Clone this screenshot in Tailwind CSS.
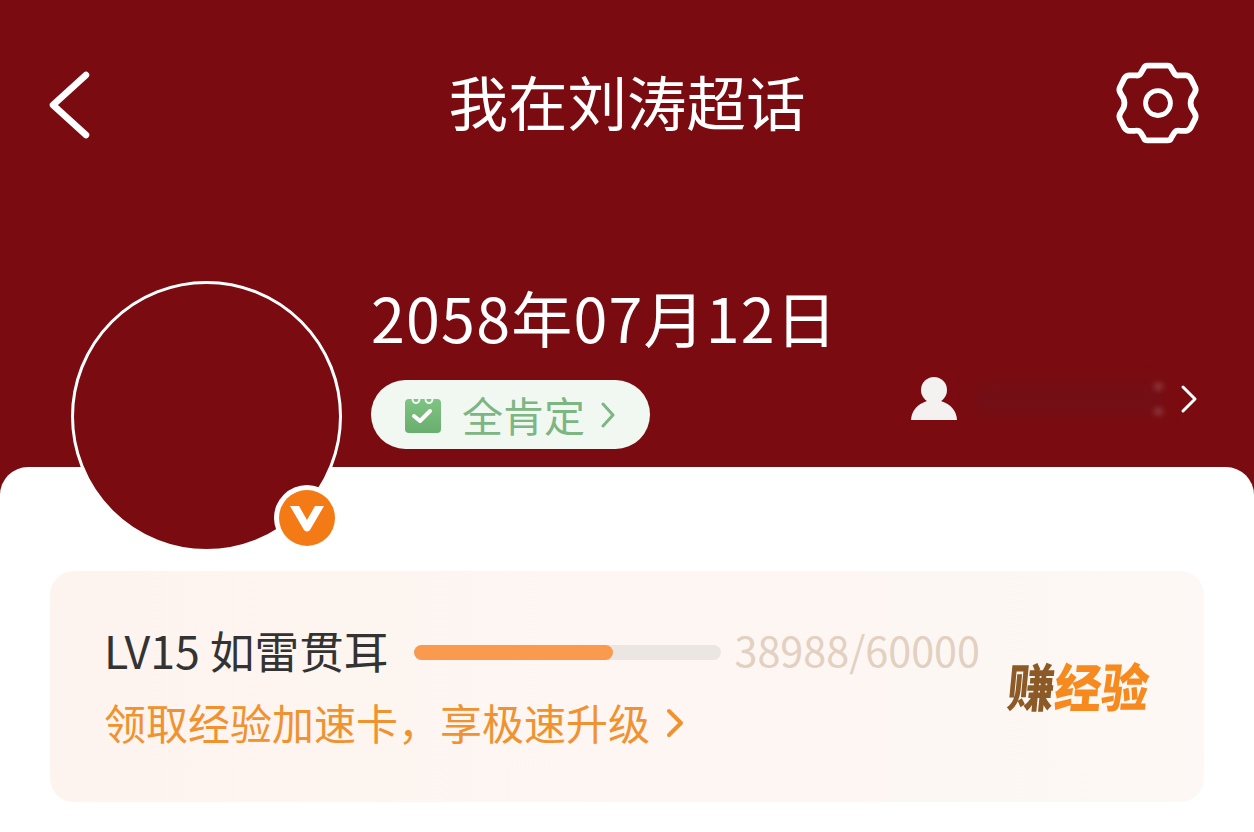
<!DOCTYPE html>
<html lang="zh-CN">
<head>
    <meta charset="UTF-8">
    <meta name="viewport" content="width=device-width, initial-scale=1.0">
    <title>我在刘涛超话</title>
    <script src="https://cdn.jsdelivr.net/npm/@tailwindcss/browser@4"></script>
</head>
<body class="bg-white font-['Noto_Sans_CJK_SC','Noto_Sans',sans-serif]">
    <div class="relative h-[832px] w-full overflow-hidden bg-[#7a0c11] flex flex-col">
        <!-- top part -->
        <header class="h-[467px] shrink-0 text-white">
            <nav class="mt-[54px] pt-[4px] h-[92px] pl-[47px] pr-[50px] grid grid-cols-[1fr_auto_1fr] items-center">
                <svg class="w-[48px] h-[72px]" viewBox="0 0 48 72" fill="none" stroke="white" stroke-width="6.5" stroke-linecap="round" stroke-linejoin="round">
                    <path d="M39 7 L6 37 L39 67"/>
                </svg>
                <h1 class="text-[59.5px] leading-none whitespace-nowrap pb-[6px] pl-[3px]">我在刘涛超话</h1>
                <svg class="justify-self-end w-[92px] h-[92px]" viewBox="-2 -2 96 96" fill="none" stroke="white" stroke-width="6" stroke-linejoin="round">
                    <path d="M35 6 H56 Q59 6 60 9 L63 14 Q65 17 69 16 L75 16 Q78 16 80 19 L85 29 Q86 32 84 35 L81 40 Q79 45 81 50 L84 55 Q86 58 85 61 L80 71 Q78 74 75 74 L69 74 Q65 73 63 76 L60 81 Q59 84 56 84 H35 Q32 84 31 81 L28 76 Q26 73 22 74 L16 74 Q13 74 11 71 L6 61 Q5 58 7 55 L10 50 Q12 45 10 40 L7 35 Q5 32 6 29 L11 19 Q13 16 16 16 L22 16 Q26 17 28 14 L31 9 Q32 6 35 6 Z"/>
                    <circle cx="46" cy="45" r="13" stroke-width="5"/>
                </svg>
            </nav>
            <div class="mt-[135px] pl-[371px] pr-[56px] flex justify-between items-end">
                <div>
                    <div class="text-[61px] leading-[72px] tracking-[1.2px] whitespace-nowrap">2058年07月12日</div>
                    <div class="mt-[27px] w-[279px] h-[69px] rounded-full bg-[#f1f8f2] flex items-center pl-[33px] text-[#7db583]">
                        <svg class="w-[38px] h-[38px]" viewBox="0 0 38 38">
                            <defs>
                                <linearGradient id="cal" x1="0" y1="0" x2="0" y2="1">
                                    <stop offset="0" stop-color="#80c483"/>
                                    <stop offset="1" stop-color="#6aae6f"/>
                                </linearGradient>
                            </defs>
                            <path d="M5 3 H33 Q37 3 37 7 V33 Q37 37 33 37 H5 Q1 37 1 33 V7 Q1 3 5 3 Z" fill="url(#cal)"/>
                            <path d="M8.5 3 a3.5 4 0 0 0 7 0 M21.5 3 a3.5 4 0 0 0 7 0" fill="none" stroke="#f1f8f2" stroke-width="2" stroke-linecap="round"/>
                            <path d="M10 20 L16 25 L26 15" fill="none" stroke="white" stroke-width="4" stroke-linecap="round" stroke-linejoin="round"/>
                        </svg>
                        <span class="ml-[20px] text-[41px] leading-none">全肯定</span>
                        <svg class="ml-[15px] w-[16px] h-[26px]" viewBox="0 0 16 26" fill="none" stroke="#7db583" stroke-width="3" stroke-linecap="round" stroke-linejoin="round">
                            <path d="M3 2 L13 13 L3 24"/>
                        </svg>
                    </div>
                </div>
                <div class="flex items-center mb-[28px]">
                    <svg class="w-[48px] h-[44px]" viewBox="0 0 48 44" fill="#f4f1f1">
                        <ellipse cx="24" cy="13" rx="13" ry="13"/>
                        <path d="M1 43 Q2 29 17 24 H31 Q46 29 47 43 Z"/>
                    </svg>
                    <!-- name is blurred out in the screenshot -->
                    <div class="relative ml-[18px] w-[186px] h-[30px]">
                        <div class="h-full bg-[#730f16] blur-[8px]"></div>
                        <div class="absolute right-0 top-0 w-[7px] h-[5px] bg-white/30 blur-[3px]"></div>
                        <div class="absolute right-0 bottom-0 w-[7px] h-[5px] bg-white/30 blur-[3px]"></div>
                    </div>
                    <svg class="ml-[18px] w-[18px] h-[30px]" viewBox="0 0 18 30" fill="none" stroke="white" stroke-width="3" stroke-linecap="round" stroke-linejoin="round">
                        <path d="M3 3 L15 15 L3 27"/>
                    </svg>
                </div>
            </div>
        </header>

        <!-- white sheet -->
        <main class="flex-1 bg-white rounded-t-[28px] px-[50px] pt-[104px]">
            <section class="h-[231px] w-[1154px] rounded-[24px] bg-gradient-to-r from-[#fdf4ef] to-[#fdf8f5] pl-[54px] pr-[55px] flex items-center justify-between">
                <div class="flex flex-col gap-[26px] pt-[3px]">
                    <div class="flex items-center h-[46px]">
                        <span class="text-[44.7px] leading-none text-[#333333] whitespace-nowrap pb-[4px]">LV15 如雷贯耳</span>
                        <div class="ml-[25px] w-[307px] h-[15px] rounded-full bg-[#ece6e3]">
                            <div class="h-full rounded-full bg-[#f99a4f]" style="width: 65%"></div>
                        </div>
                        <span class="ml-[14px] text-[41.3px] leading-none text-[#e2d0c1] whitespace-nowrap pb-[4px]">38988/60000</span>
                    </div>
                    <div class="flex items-center h-[46px] text-[#f0922f]">
                        <span class="text-[42px] leading-none whitespace-nowrap pb-[4px]">领取经验加速卡，享极速升级</span>
                        <svg class="ml-[16px] mb-[2px] w-[18px] h-[30px]" viewBox="0 0 18 30" fill="none" stroke="#f0922f" stroke-width="4" stroke-linecap="round" stroke-linejoin="round">
                            <path d="M3 3 L15 15 L3 27"/>
                        </svg>
                    </div>
                </div>
                <div class="text-[47px] leading-none font-black -skew-x-6 scale-y-110 whitespace-nowrap pb-[4px]">
                    <span class="text-[#8c5a26]">赚</span><span class="text-[#f68a1e]">经验</span>
                </div>
            </section>
        </main>

        <!-- avatar overlaps the sheet -->
        <div class="absolute left-[71px] top-[281px] w-[271px] h-[271px] rounded-full bg-[#7a0c11] border-[3px] border-white"></div>
        <div class="absolute left-[274px] top-[485px] w-[66px] h-[66px] rounded-full bg-white flex items-center justify-center">
            <div class="w-[56px] h-[56px] rounded-full bg-[#f47a15] flex items-center justify-center">
                <svg class="w-[38px] h-[30px]" viewBox="0 0 38 30" fill="white">
                    <path d="M2 3 H11 L19 17 L27 3 H36 L22 27 Q19 30 16 27 Z"/>
                </svg>
            </div>
        </div>
    </div>
</body>
</html>
